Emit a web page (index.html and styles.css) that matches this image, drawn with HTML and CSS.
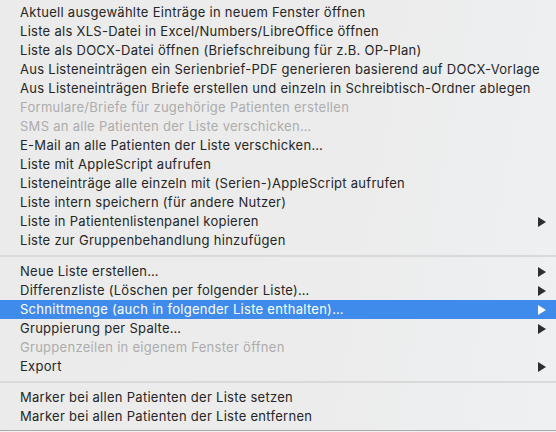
FILE: index.html
```html
<!DOCTYPE html>
<html lang="de">
<head>
<meta charset="utf-8">
<link rel="stylesheet" href="styles.css">
</head>
<body>
<div class="menu">
  <div class="group">
    <div class="item">Aktuell ausgewählte Einträge in neuem Fenster öffnen</div>
    <div class="item">Liste als XLS-Datei in Excel/Numbers/LibreOffice öffnen</div>
    <div class="item">Liste als DOCX-Datei öffnen (Briefschreibung für z.B. OP-Plan)</div>
    <div class="item">Aus Listeneinträgen ein Serienbrief-PDF generieren basierend auf DOCX-Vorlage</div>
    <div class="item">Aus Listeneinträgen Briefe erstellen und einzeln in Schreibtisch-Ordner ablegen</div>
    <div class="item disabled">Formulare/Briefe für zugehörige Patienten erstellen</div>
    <div class="item disabled">SMS an alle Patienten der Liste verschicken…</div>
    <div class="item">E-Mail an alle Patienten der Liste verschicken…</div>
    <div class="item">Liste mit AppleScript aufrufen</div>
    <div class="item">Listeneinträge alle einzeln mit (Serien-)AppleScript aufrufen</div>
    <div class="item">Liste intern speichern (für andere Nutzer)</div>
    <div class="item sub">Liste in Patientenlistenpanel kopieren<svg class="arrow" viewBox="0 0 8 10"><polygon points="0,0 8,5 0,10"/></svg></div>
    <div class="item">Liste zur Gruppenbehandlung hinzufügen</div>
  </div>
  <div class="sep"></div>
  <div class="group">
    <div class="item sub">Neue Liste erstellen…<svg class="arrow" viewBox="0 0 8 10"><polygon points="0,0 8,5 0,10"/></svg></div>
    <div class="item sub">Differenzliste (Löschen per folgender Liste)…<svg class="arrow" viewBox="0 0 8 10"><polygon points="0,0 8,5 0,10"/></svg></div>
    <div class="item sub active">Schnittmenge (auch in folgender Liste enthalten)…<svg class="arrow" viewBox="0 0 8 10"><polygon points="0,0 8,5 0,10"/></svg></div>
    <div class="item sub">Gruppierung per Spalte…<svg class="arrow" viewBox="0 0 8 10"><polygon points="0,0 8,5 0,10"/></svg></div>
    <div class="item disabled">Gruppenzeilen in eigenem Fenster öffnen</div>
    <div class="item sub">Export<svg class="arrow" viewBox="0 0 8 10"><polygon points="0,0 8,5 0,10"/></svg></div>
  </div>
  <div class="sep"></div>
  <div class="group">
    <div class="item">Marker bei allen Patienten der Liste setzen</div>
    <div class="item">Marker bei allen Patienten der Liste entfernen</div>
  </div>
</div>
</body>
</html>
```
FILE: styles.css
```css
html, body {
  margin: 0;
  padding: 0;
  background: #f2f2f2;
}
.menu {
  width: 556px;
  box-sizing: border-box;
  padding: 3px 0 4px;
  background: linear-gradient(100deg, #ebebeb 0%, #ececec 60%, #eef0f2 100%);
  border-bottom: 1px solid #a9a9a9;
  font-family: Inter, "Liberation Sans", sans-serif;
  font-size: 13px;
  letter-spacing: 0.28px;
  color: #262626;
}
.group {
  display: flex;
  flex-direction: column;
}
.item {
  height: 19px;
  line-height: 19px;
  padding: 0 10px 0 20px;
  display: flex;
  align-items: center;
  justify-content: space-between;
  white-space: nowrap;
}
.item.disabled {
  color: #acacac;
}
.item.active {
  background: #3e8bec;
  color: #ffffff;
}
.arrow {
  width: 8px;
  height: 10px;
  fill: #2e2e2e;
  flex: none;
}
.active .arrow {
  fill: #ffffff;
}
.sep {
  height: 2px;
  margin: 5px 0;
  background: #d9d9d9;
}
```
